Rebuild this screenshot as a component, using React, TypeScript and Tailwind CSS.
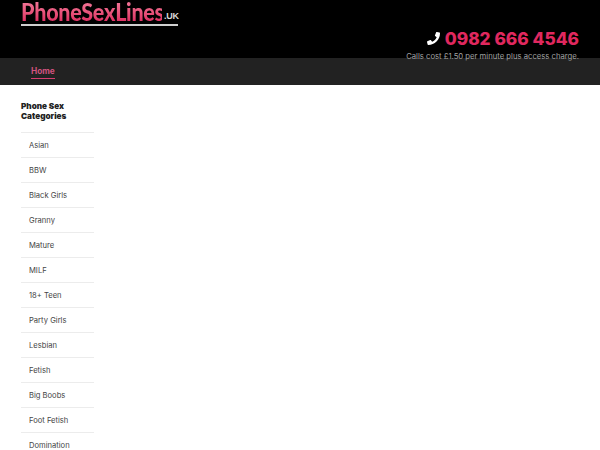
import { FaPhone } from "react-icons/fa";

const cats = ["Asian","BBW","Black Girls","Granny","Mature","MILF","18+ Teen","Party Girls","Lesbian","Fetish","Big Boobs","Foot Fetish","Domination"];

export default function App() {
  return (
    <div className="h-[450px] w-[600px] overflow-hidden bg-white font-['Inter',sans-serif]">
      <header className="relative flex h-[58px] justify-between bg-black pl-[21px] pr-[21px]">
        <div className="flex h-[26px] w-[157px] flex-col">
          <div className="flex h-[24px] items-start whitespace-nowrap">
            <span className="mr-[-23px] inline-block h-[24px] w-[164px] origin-left scale-x-[0.86] bg-gradient-to-b from-[#f27a9c] to-[#dc1f5c] bg-clip-text font-['Lato',sans-serif] text-[25px] leading-[22px] font-black tracking-[-0.3px] text-transparent">PhoneSexLines</span>
            <span className="ml-[2px] pt-[11px] font-['Liberation_Sans',sans-serif] text-[9px] leading-[10px] font-bold tracking-[-0.3px] text-[#d8d8d8]">.UK</span>
          </div>
          <div className="h-[2px] w-[157px] bg-[#cfcfcf]" />
        </div>
        <div className="flex flex-col items-end pt-[28px]">
          <div className="flex h-[21px] items-center gap-[5px]">
            <FaPhone className="h-[13px] w-[13px] text-white" />
            <span className="text-[17.3px] leading-[21px] font-extrabold text-[#e0285f]">0982 666 4546</span>
          </div>
          <div className="absolute top-[51px] right-[21px] text-[7.7px] leading-[11px] text-[#a0a0a0]">Calls cost £1.50 per minute plus access charge.</div>
        </div>
      </header>
      <nav className="flex h-[27px] items-start bg-[#222222] pl-[31px]">
        <a className="mt-[8px] border-b border-[#d63d70] pb-[1px] text-[8.3px] leading-[11px] font-bold text-[#d0527e]">Home</a>
      </nav>
      <aside className="ml-[21px] w-[73px] pt-[16px]">
        <h2 className="pb-[11px] text-[8.2px] leading-[10px] font-black text-[#222222]">Phone Sex Categories</h2>
        <ul>
          {cats.map((c) => (
            <li key={c} className="h-[25px] border-t border-[#ececec] pl-[8px] text-[7.6px] leading-[25px] text-[#444444]">{c}</li>
          ))}
        </ul>
      </aside>
    </div>
  );
}
